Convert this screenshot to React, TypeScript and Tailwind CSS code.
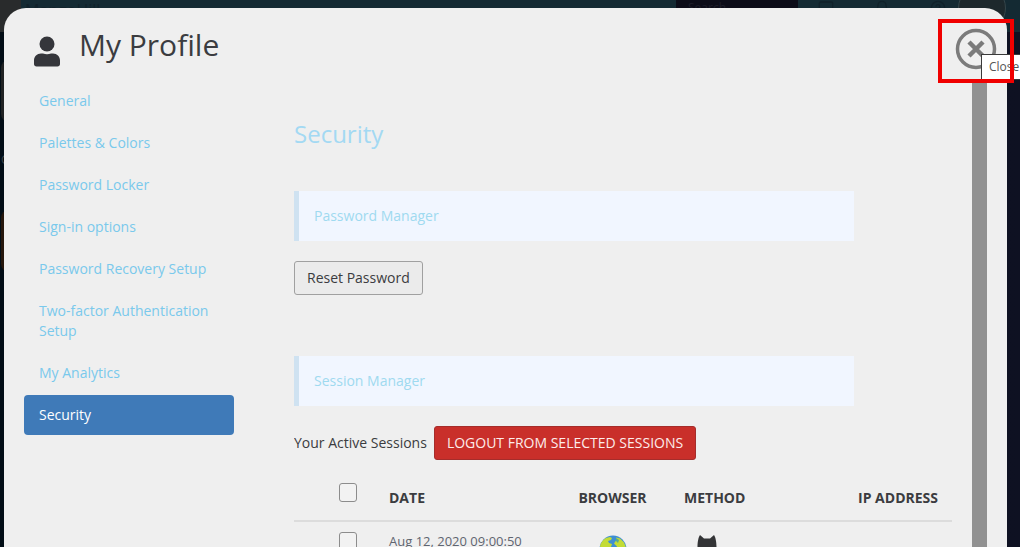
import { useState } from "react";
import { Bell, HelpCircle, Monitor } from "lucide-react";

const menu = [
  "General",
  "Palettes & Colors",
  "Password Locker",
  "Sign-in options",
  "Password Recovery Setup",
  "Two-factor Authentication Setup",
  "My Analytics",
  "Security",
];

const sessions = [{ id: 1, date: "Aug 12, 2020 09:00:50" }];

function UserIcon() {
  return (
    <svg width="28" height="32" viewBox="0 0 28 32" fill="#35363b" aria-hidden="true">
      <circle cx="14" cy="8" r="7.5" />
      <path d="M8 17.500h2c2.600 1 5.400 1 8 0h2c4 0 7 3 7 7V28c0 1.600-1 2.500-2.500 2.500h-21C2 30.500 1 29.600 1 28v-3.500c0-4 3-7 7-7z" />
    </svg>
  );
}

function CloseIcon() {
  return (
    <svg width="42" height="42" viewBox="0 0 42 42" fill="none" stroke="#7b7b7b" aria-hidden="true">
      <circle cx="21" cy="21" r="18.500" strokeWidth="3.500" />
      <path d="M14 14l14 14M28 14L14 28" strokeWidth="4.500" />
    </svg>
  );
}

function GlobeIcon() {
  return (
    <svg width="28" height="28" viewBox="0 0 28 28" aria-hidden="true">
      <circle cx="14" cy="14" r="13.500" fill="#3f8fd2" />
      <path d="M1 11C2 7 4.500 4.500 7 3l4-1 2 1-1 2-3 1 1 2 3 1-1 3-3 1-2 4-3 1-2-3z" fill="#c3dc35" />
      <path d="M17 2.500l4 1 4 4 2 5v6l-3 4-4-3-3-5 1-3-3-3 2-3z" fill="#c3dc35" />
      <path d="M9 17l5 2 1 4-4 4-4-5z" fill="#c3dc35" />
      <path d="M17 3l3 2-1 3-2-2z" fill="#57ab8e" />
    </svg>
  );
}

function CatIcon() {
  return (
    <svg width="20" height="28" viewBox="0 0 20 28" fill="#333436" aria-hidden="true">
      <path d="M3 0l4 3.500h6L17 0c1.500 2 2.500 7 2.500 12 0 8-4 15-9.500 15S.5 20 .5 12C.5 7 1.500 2 3 0z" />
    </svg>
  );
}

function Callout({ title }: { title: string }) {
  return (
    <div className="mr-[98px] border-l-[5px] border-[#cfe2f1] bg-[#f1f6ff] p-[15px]">
      <h3 className="text-sm leading-5 text-[#9fdaf0]">{title}</h3>
    </div>
  );
}

function TopBar() {
  return (
    <header className="flex h-8 items-start overflow-hidden bg-[#142a33] text-[#10212a]">
      <div className="h-8 w-[21px] bg-[#292b2c]" />
      <span className="ml-1 text-base leading-5">MangoHill</span>
      <div className="ml-auto h-8 w-[122px] bg-[#0c0c18] pl-3 text-xs leading-4 text-[#1c1c28]">
        Search
      </div>
      <div className="flex w-[160px] gap-10 pl-5">
        <Monitor size={16} />
        <Bell size={16} />
        <HelpCircle size={16} />
      </div>
      <div className="mr-[14px] -mt-4 h-12 w-12 rounded-full border border-[#34454a] bg-[#1d282c]" />
    </header>
  );
}

// desktop tiles, mostly hidden by the profile window
function Desktop() {
  return (
    <div className="px-px pt-7 text-xs text-[#3c4448]">
      <div className="h-[62px] w-16 rounded-lg bg-[#202223]" />
      <div className="mt-7 leading-5">General</div>
      <div className="mt-10 h-[62px] w-16 rounded-lg bg-[#26170c]" />
    </div>
  );
}

export default function App() {
  const [active, setActive] = useState("Security");
  const [selected, setSelected] = useState<number[]>([]);

  const toggle = (id: number) => {
    setSelected(
      selected.includes(id) ? selected.filter((s) => s !== id) : [...selected, id]
    );
  };

  const box =
    "block h-[19px] w-[18px] appearance-none rounded-[3px] border border-[#8c8c8c] bg-[#f2f2f2] checked:bg-[#3f7ab8]";

  return (
    <div className="relative h-screen overflow-hidden bg-linear-to-r from-[#020d16] to-[#0e1122] font-['Open_Sans',sans-serif] text-sm leading-5 text-[#3b3c40]">
      <TopBar />
      <Desktop />

      <div className="absolute top-2 right-[13px] bottom-0 left-1 flex flex-col rounded-t-[22px] bg-[#efefef]">
        <div className="flex h-[73px] shrink-0 items-start pt-5 pl-[29px]">
          <div className="mt-2">
            <UserIcon />
          </div>
          <h1 className="ml-[18px] text-[30px] leading-[34px]">My Profile</h1>
        </div>

        <div className="flex min-h-0 flex-1 pr-5">
          <nav className="ml-5 flex w-[210px] shrink-0 flex-col gap-[2px]">
            {menu.map((item) => (
              <a
                key={item}
                href="#"
                onClick={() => setActive(item)}
                className={
                  item === active
                    ? "rounded-[4px] bg-[#3f7ab8] px-[15px] py-[10px] text-white"
                    : "rounded-[4px] px-[15px] py-[10px] text-[#7ac9ec]"
                }
              >
                {item}
              </a>
            ))}
          </nav>

          <main className="ml-[60px] min-w-0 flex-1 overflow-hidden pr-5">
            <h2 className="mt-[38px] mb-[42px] text-2xl leading-[30px] text-[#a3d9f3]">
              Security
            </h2>

            <Callout title="Password Manager" />
            <button className="mt-5 mb-[61px] block rounded-[3px] border border-[#a0a0a0] bg-[#ebebeb] px-3 py-[6px]">
              Reset Password
            </button>

            <Callout title="Session Manager" />
            <div className="mt-5 flex items-center gap-[7px]">
              <span>Your Active Sessions</span>
              <button className="rounded-[3px] border border-[#a52d2b] bg-[#c92f2a] px-3 py-[6px] text-[#fdeceb]">
                LOGOUT FROM SELECTED SESSIONS
              </button>
            </div>

            <table className="mt-[14px] w-full table-fixed">
              <colgroup>
                <col className="w-[87px]" />
                <col className="w-[188px]" />
                <col className="w-[87px]" />
                <col className="w-[120px]" />
                <col />
              </colgroup>
              <thead>
                <tr className="h-[47px] border-b-2 border-[#dcdcdc] align-top">
                  <th className="pt-[9px] pl-[45px]">
                    <input
                      type="checkbox"
                      aria-label="Select all sessions"
                      className={box}
                      checked={selected.length === sessions.length}
                      onChange={() =>
                        setSelected(
                          selected.length === sessions.length ? [] : sessions.map((s) => s.id)
                        )
                      }
                    />
                  </th>
                  <th className="px-2 pt-[14px] text-left font-bold">DATE</th>
                  <th className="pt-[14px] text-center font-bold">BROWSER</th>
                  <th className="pt-[14px] pl-7 text-left font-bold">METHOD</th>
                  <th className="pt-[14px] pr-[14px] text-right font-bold">IP ADDRESS</th>
                </tr>
              </thead>
              <tbody>
                {sessions.map((s) => (
                  <tr key={s.id} className="align-top">
                    <td className="pt-[10px] pl-[45px]">
                      <input
                        type="checkbox"
                        aria-label={s.date}
                        className={box}
                        checked={selected.includes(s.id)}
                        onChange={() => toggle(s.id)}
                      />
                    </td>
                    <td className="px-2 pt-[9px] text-[13px] text-[#5f6570]">{s.date}</td>
                    <td className="pt-[13px] pl-[30px]">
                      <GlobeIcon />
                    </td>
                    <td className="pt-[13px] pl-[41px]">
                      <CatIcon />
                    </td>
                    <td />
                  </tr>
                ))}
              </tbody>
            </table>
          </main>

          <div className="w-[15px] shrink-0 bg-[#919191]" />
        </div>
      </div>

      <button aria-label="Close" className="absolute top-7 right-[23px]">
        <CloseIcon />
      </button>
      <div
        role="tooltip"
        className="absolute top-[54px] right-0 w-[39px] overflow-hidden border border-r-0 border-[#3a3a3a] bg-white pl-[7px] text-xs leading-6 whitespace-nowrap text-[#555555]"
      >
        Close
      </div>
      <div className="pointer-events-none absolute top-[19px] right-[6px] h-16 w-[76px] border-4 border-[#f00000]" />
    </div>
  );
}
